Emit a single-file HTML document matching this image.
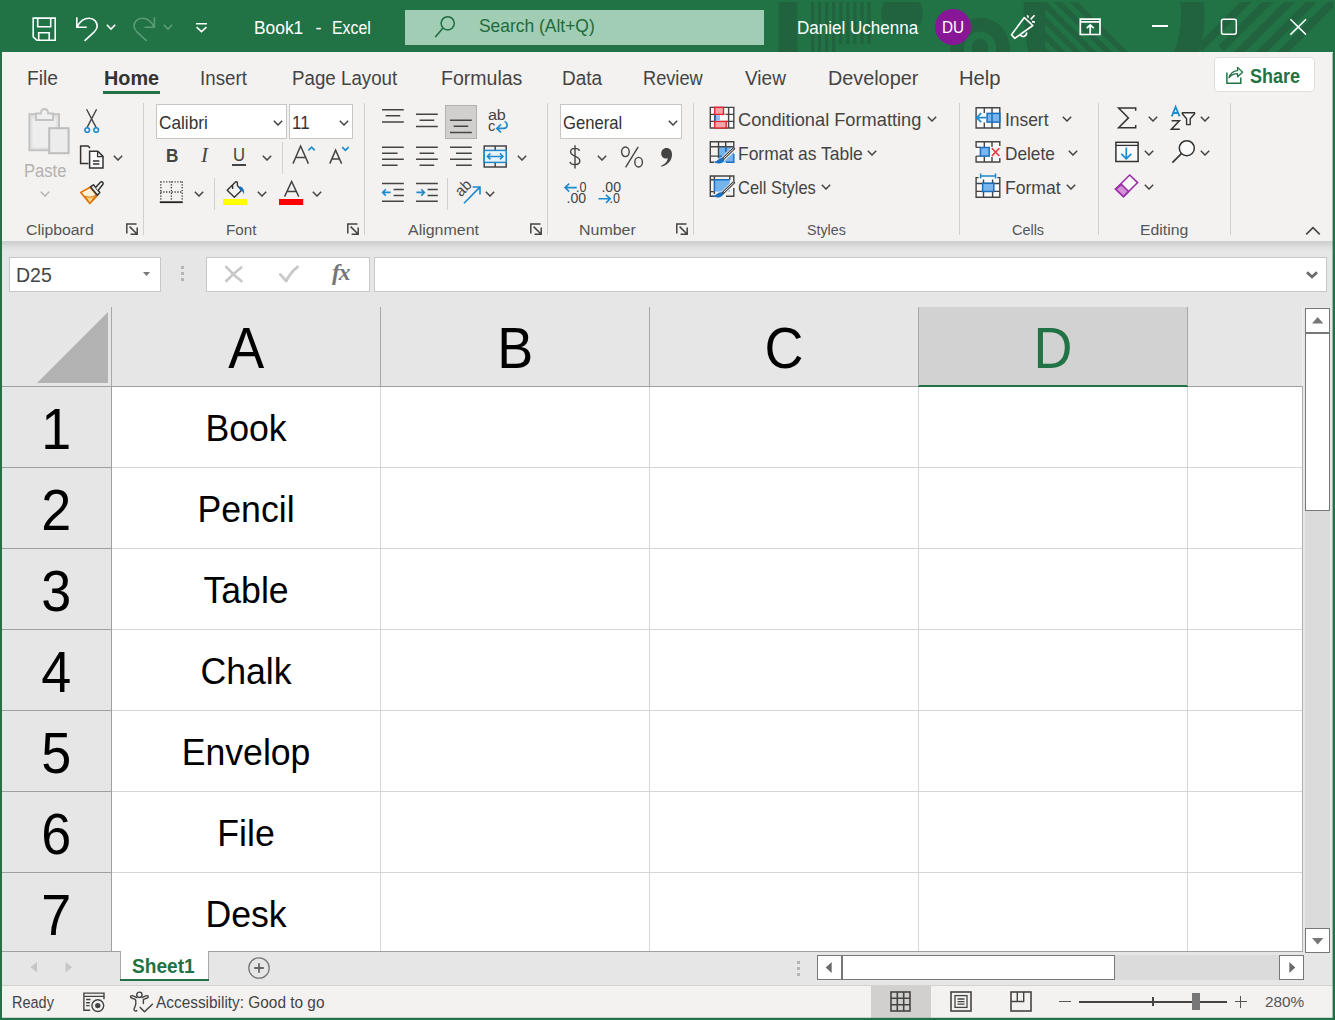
<!DOCTYPE html>
<html>
<head>
<meta charset="utf-8">
<title>Book1 - Excel</title>
<style>
*{box-sizing:border-box;margin:0;padding:0}
html,body{width:1335px;height:1020px;overflow:hidden;background:#f3f2f1}
body{font-family:"Liberation Sans",sans-serif;position:relative;color:#444}
.abs{position:absolute}
.t{position:absolute;white-space:nowrap;line-height:1;transform-origin:0 50%}
svg{position:absolute;overflow:visible}
/* frame */
#frameL{left:0;top:52px;width:2px;height:968px;background:#217346}
#frameR{left:1333px;top:52px;width:2px;height:968px;background:#217346}
#frameB{left:0;top:1018px;width:1335px;height:2px;background:#217346}
/* title */
#title{left:0;top:0;width:1335px;height:53px;background:#217346;overflow:hidden}
#title .t{color:#fff}
#search{left:405px;top:10px;width:359px;height:35px;background:#a0cdb4}
/* tabs */
#tabs{left:2px;top:52px;width:1331px;height:46px;background:#f3f2f1}
#tabs .t{font-size:19px;color:#444;top:66px}
/* ribbon */
#ribbon{left:2px;top:98px;width:1331px;height:143px;background:#f3f2f1}
.sep{position:absolute;width:1px;background:#d2d0ce;top:103px;height:132px}
.glabel{font-size:15px;color:#555;top:222px}
/* formula */
#fbar{left:2px;top:241px;width:1331px;height:66px;background:#e6e6e6}
.wbox{position:absolute;background:#fff;border:1px solid #c8c8c8}
/* grid */
#grid{left:2px;top:307px;width:1300px;height:644px;background:#fff;overflow:hidden}
.ch{position:absolute;top:307px;height:79px;background:#e6e6e6}
.chl{position:absolute;top:307px;height:79px;width:1px;background:#a8a8a8}
.ct{font-size:52px;color:#000;top:322px}
.rh{position:absolute;left:2px;width:109px;background:#e6e6e6}
.rt{font-size:52px;color:#000}
.vl{position:absolute;width:1px;background:#d6d6d6;top:387px;height:564px}
.hl{position:absolute;height:1px;background:#d6d6d6;left:112px;width:1190px}
.rhl{position:absolute;height:1px;background:#9f9f9f;left:2px;width:109px}
.cell{font-size:33px;color:#000}
</style>
</head>
<body>
<!-- TITLE BAR -->
<div id="title" class="abs">
<svg style="left:0;top:0" width="1335" height="53" viewBox="0 0 1335 53"><defs><clipPath id="tc"><rect x="0" y="2" width="1333" height="51"/></clipPath><clipPath id="d1"><rect x="1045" y="2" width="90" height="51"/></clipPath><clipPath id="d2"><rect x="1190" y="2" width="143" height="51"/></clipPath></defs>
<g fill="#22633f" clip-path="url(#tc)">
<rect x="778.500" y="2" width="19" height="51"/><rect x="811.0" y="2" width="3.2" height="50"/><rect x="818.0" y="2" width="3.2" height="50"/><rect x="825.1" y="2" width="3.2" height="50"/><rect x="832.1" y="2" width="3.2" height="50"/><rect x="839.2" y="2" width="3.2" height="42"/><rect x="846.2" y="2" width="3.2" height="42"/><rect x="853.3" y="2" width="3.2" height="42"/><rect x="860.4" y="2" width="3.2" height="42"/><rect x="867.4" y="2" width="3.2" height="42"/>
<circle cx="902" cy="13.600" r="21"/>
<path d="M950.5,47.300 A29.500,29.500 0 0 1 1009.500,47.300 V53 H995.800 V47.300 A15.800,15.800 0 0 0 964.200,47.300 V53 H950.500 Z"/>
<circle cx="980" cy="47.300" r="8.500"/>
<path d="M1023.700,2 H1045.200 V53 H1028.500 C1025,36 1023,20 1023.700,2 Z"/>
<path d="M1000,27 C1006,32 1010,42 1010,53 H1000 Z"/>
<path d="M1180.500,2 H1203.500 C1206,20 1204,38 1198.500,53 H1173.500 C1180,38 1182.500,20 1180.500,2 Z"/>
<g clip-path="url(#d1)"><polygon points="992.0,2 1000.0,2 1051.0,53 1043.0,53"/><polygon points="1007.5,2 1015.5,2 1066.5,53 1058.5,53"/><polygon points="1023.0,2 1031.0,2 1082.0,53 1074.0,53"/><polygon points="1038.5,2 1046.5,2 1097.5,53 1089.5,53"/><polygon points="1054.0,2 1062.0,2 1113.0,53 1105.0,53"/><polygon points="1069.5,2 1077.5,2 1128.5,53 1120.5,53"/></g>
<g clip-path="url(#d2)"><polygon points="1240.3,2 1251.5,2 1202.2,51.3 1196.6,45.7"/><polygon points="1262.1,2 1273.3,2 1224.0,51.3 1218.4,45.7"/><polygon points="1283.9,2 1295.1,2 1244.1,53 1232.9,53"/><polygon points="1305.7,2 1316.9,2 1265.9,53 1254.7,53"/><polygon points="1327.5,2 1338.7,2 1287.7,53 1276.5,53"/></g>
</g></svg>
<div id="search" class="abs"></div>
<svg style="left:31px;top:16px" width="27" height="27" viewBox="0 0 27 27"><path d="M2.200,2.100 H24.200 V24.300 H5.800 L2.200,20.800 Z M6.700,2.100 V10.700 H19.700 V2.100 M7.700,24.300 V16.700 H18.200 V24.300" fill="none" stroke="#fff" stroke-width="1.600"/></svg>
<svg style="left:74px;top:15px" width="26" height="28" viewBox="0 0 26 28"><path d="M2.800,2.300 V12.300 H12.700 M3.400,11.700 C6,6 10,3.200 15,3.200 C20,3.200 23.200,7 23.200,11 C23.200,14 21.600,15.600 20,17.200 L10.600,25.800" fill="none" stroke="#fff" stroke-width="1.600"/></svg>
<svg class="cv" style="left:106px;top:24px;width:11px;height:6.600px"><path d="M0.800,0.800 L5,5 L9.200,0.800" fill="none" stroke="#fff" stroke-width="1.600"/></svg>
<svg style="left:131px;top:15px" width="26" height="28" viewBox="0 0 26 28"><path d="M23.400,2.300 V12.300 H13.500 M22.800,11.700 C20.200,6 16.200,3.200 11.200,3.200 C6.200,3.200 3,7 3,11 C3,14 4.600,15.600 6.200,17.200 L15.600,25.800" fill="none" stroke="#5b9b78" stroke-width="1.600"/></svg>
<svg class="cv" style="left:163px;top:24px;width:11px;height:6.600px"><path d="M0.800,0.800 L5,5 L9.200,0.800" fill="none" stroke="#5b9b78" stroke-width="1.600"/></svg>
<svg style="left:195px;top:22px" width="13" height="11" viewBox="0 0 13 11"><path d="M1,1.700 H12 M1.600,5.200 L6.500,9.700 L11.400,5.200" fill="none" stroke="#fff" stroke-width="1.600"/></svg>
<svg style="left:433px;top:14px" width="24" height="25" viewBox="0 0 24 25"><circle cx="14.700" cy="9.300" r="6.600" fill="none" stroke="#1e6b40" stroke-width="1.500"/><path d="M10,14 L2.300,22.900" stroke="#1e6b40" stroke-width="1.600"/></svg>
<svg style="left:1009px;top:13px" width="28" height="28" viewBox="0 0 28 28"><g fill="none" stroke="#fff" stroke-width="1.600" stroke-linejoin="round"><path d="M15.300,4.600 L23.800,12.500 L5.800,25.400 L2.500,21.700 Z"/><path d="M11.200,21.700 A3.400,3.400 0 0 0 17.500,19.400"/><path d="M18.400,2.200 L19.400,4.800 M21.600,6.400 L25.600,2.300 M22.900,8.600 L25.900,9.100"/></g></svg>
<svg style="left:1079px;top:18px" width="22" height="18" viewBox="0 0 22 18"><path d="M1.300,1.200 H21 V16.500 H1.300 Z M1.300,3.900 H21 M11.200,16 V7.200 M7.700,10.200 L11.200,7 L14.700,10.200" fill="none" stroke="#fff" stroke-width="1.700"/></svg>
<div class="abs" style="left:1152px;top:25px;width:16px;height:1.500px;background:#fff"></div>
<svg style="left:1220px;top:18px" width="18" height="18" viewBox="0 0 18 18"><rect x="1.500" y="1.300" width="14.800" height="15" rx="2" fill="none" stroke="#fff" stroke-width="1.500"/></svg>
<svg style="left:1289px;top:18px" width="18" height="18" viewBox="0 0 18 18"><path d="M1.400,1.300 L17,16.600 M17,1.300 L1.400,16.600" stroke="#fff" stroke-width="1.500"/></svg>
<span class="t" style="left:254px;top:18.500px;font-size:18px;transform:scaleX(.965)">Book1</span><span class="t" style="left:315.500px;top:18.500px;font-size:18px">-</span><span class="t" style="left:332px;top:18.500px;font-size:18px;transform:scaleX(.88)">Excel</span>
<span class="t" style="left:479px;top:18.400px;font-size:17.800px;color:#1e6b40;transform:scaleX(.98)">Search (Alt+Q)</span>
<span class="t" style="left:797px;top:19.500px;font-size:17.500px;transform:scaleX(.973)">Daniel Uchenna</span>
<div class="abs" style="left:935px;top:9px;width:36px;height:36px;border-radius:50%;background:#881798"></div>
<span class="t" style="left:942px;top:19.300px;font-size:16.300px;transform:scaleX(.94)">DU</span>
</div>
<div id="frameL" class="abs"></div><div class="abs" style="left:1332px;top:53px;width:1px;height:965px;background:rgba(33,115,70,.4);z-index:5"></div><div class="abs" style="left:2px;top:1017px;width:1331px;height:1px;background:rgba(33,115,70,.2);z-index:5"></div><div id="frameR" class="abs"></div><div id="frameB" class="abs"></div>

<!-- TABS -->
<div id="tabs" class="abs"></div>
<div id="tabtexts">
<span class="t" style="left:27px;top:67.500px;font-size:20px;transform:scaleX(0.961)">File</span>
<span class="t" style="left:103.5px;top:67.500px;font-size:20px;font-weight:bold;color:#333;transform:scaleX(0.991)">Home</span>
<span class="t" style="left:200px;top:67.500px;font-size:20px;transform:scaleX(0.937)">Insert</span>
<span class="t" style="left:292.2px;top:67.500px;font-size:20px;transform:scaleX(0.937)">Page Layout</span>
<span class="t" style="left:440.7px;top:67.500px;font-size:20px;transform:scaleX(0.976)">Formulas</span>
<span class="t" style="left:562px;top:67.500px;font-size:20px;transform:scaleX(0.950)">Data</span>
<span class="t" style="left:642.8px;top:67.500px;font-size:20px;transform:scaleX(0.910)">Review</span>
<span class="t" style="left:744.5px;top:67.500px;font-size:20px;transform:scaleX(0.951)">View</span>
<span class="t" style="left:827.6px;top:67.500px;font-size:20px;transform:scaleX(0.990)">Developer</span>
<span class="t" style="left:959.3px;top:67.500px;font-size:20px;transform:scaleX(1.012)">Help</span>
</div>
<div class="abs" style="left:103px;top:91px;width:57px;height:3px;background:#217346"></div>
<div class="abs" style="left:1214px;top:57px;width:101px;height:35px;background:#fff;border:1px solid #e1dfdd;border-radius:4px"></div>
<span class="t" style="left:1250px;top:65.500px;font-size:20.600px;font-weight:bold;color:#217346;transform:scaleX(.875)">Share</span>
<svg style="left:1225px;top:65px" width="20" height="20" viewBox="0 0 20 20"><path d="M1.900,7.400 V18.300 H15.800 V12.500" fill="none" stroke="#217346" stroke-width="1.500"/><path d="M4,12.800 C5,8 9,5.600 12.600,5.600 V2.400 L17.600,7.200 L12.600,11.800 V8.600 C9,8.600 6,10 4,12.800 Z" fill="none" stroke="#217346" stroke-width="1.300" stroke-linejoin="round"/></svg>

<!-- RIBBON -->
<div id="ribbon" class="abs"></div>
<!--RIBBON-START-->
<svg width="0" height="0" style="left:0;top:0"><defs>
<symbol id="chev" viewBox="0 0 10 6"><path d="M0.8,0.8 L5,5 L9.2,0.8" fill="none" stroke="#444" stroke-width="1.5"/></symbol>
<symbol id="chevg" viewBox="0 0 10 6"><path d="M0.8,0.8 L5,5 L9.2,0.8" fill="none" stroke="#b5b3b1" stroke-width="1.5"/></symbol>
<symbol id="lnch" viewBox="0 0 12 12"><path d="M10.5,0.9 H0.8 V10.5 M3.6,3.6 L11,11 M11.2,4.6 V11.2 H4.6" fill="none" stroke="#444" stroke-width="1.5"/></symbol>
</defs></svg>
<style>
.cv{width:10px;height:6px}
.ln{width:12px;height:12px}
.gl{position:absolute;white-space:nowrap;line-height:1;font-size:15.5px;color:#555;top:222px;transform-origin:0 50%}
.rt18{position:absolute;white-space:nowrap;line-height:1;font-size:18.5px;color:#444;transform-origin:0 50%}
.cbox{position:absolute;background:#fff;border:1px solid #c8c6c4;top:104px;height:35px}
.ssep{position:absolute;width:1px;background:#d2d0ce}
</style>
<div class="sep" style="left:143px"></div>
<div class="sep" style="left:364px"></div>
<div class="sep" style="left:547px"></div>
<div class="sep" style="left:693px"></div>
<div class="sep" style="left:959px"></div>
<div class="sep" style="left:1098px"></div>
<div class="sep" style="left:1230px"></div>
<!-- Clipboard -->
<svg style="left:26px;top:106px" width="46" height="50" viewBox="0 0 46 50">
<rect x="3.4" y="8.2" width="29.6" height="36" fill="#e3e3e3" stroke="#c3c3c3" stroke-width="2"/>
<rect x="6.5" y="12.5" width="23.5" height="29" fill="#eeeeee"/>
<path d="M10,14 V7.5 H15 C15,1.5 22,1.500 22,7.5 H27 V14 Z" fill="#f0f0f0" stroke="#c3c3c3" stroke-width="1.8"/>
<rect x="23.2" y="22.2" width="19.4" height="25" fill="#ececec" stroke="#bdbdbd" stroke-width="2"/>
</svg>
<span class="t" style="left:24px;top:162px;font-size:18px;color:#b3b1af;transform:scaleX(.92)">Paste</span>
<svg class="cv" style="left:40px;top:191px"><use href="#chevg"/></svg>
<svg style="left:83px;top:108px" width="18" height="26" viewBox="0 0 18 26">
<path d="M3.6,1.2 L13.2,19.6 M13.6,1.2 L4,19.6" stroke="#444" stroke-width="1.4" fill="none"/>
<circle cx="4.2" cy="22" r="2.3" fill="none" stroke="#1e8bcd" stroke-width="1.6"/><circle cx="13.2" cy="22" r="2.3" fill="none" stroke="#1e8bcd" stroke-width="1.6"/></svg>
<svg style="left:79px;top:144px" width="26" height="26" viewBox="0 0 26 26">
<path d="M9.5,19.6 H1.6 V2 H9 L11,4" fill="none" stroke="#333" stroke-width="1.5"/>
<path d="M10.6,7.2 H18.8 L24,12.4 V24 H10.6 Z" fill="#fafafa" stroke="#333" stroke-width="1.5"/>
<path d="M18.6,7.4 V12.6 H23.8 M14,17 H20.4 M14,20 H20.4" fill="none" stroke="#333" stroke-width="1.3"/></svg>
<svg class="cv" style="left:113px;top:155px"><use href="#chev"/></svg>
<svg style="left:79px;top:180px" width="26" height="25" viewBox="0 0 26 25">
<path d="M1.8,12.4 L11.2,7.2 L18.2,15.6 L10.8,23.4 Z" fill="#fdf1d8" stroke="#e07000" stroke-width="1.6" stroke-linejoin="round"/>
<path d="M6.2,16.2 C10,17.6 14,17.4 17,14.8 L10.8,23.2 Z" fill="#fbd38a" stroke="#e07000" stroke-width="1"/>
<path d="M11.4,6.8 L14.4,4.8 L20.8,12.6 L18.4,15.2 Z" fill="#f3f2f1" stroke="#333" stroke-width="1.5" stroke-linejoin="round"/>
<path d="M16.6,7.6 L21.4,2.2 C23,1 25,3 23.8,4.6 L19,10.4" fill="#f3f2f1" stroke="#333" stroke-width="1.5" stroke-linejoin="round"/></svg>
<span class="gl" style="left:26px;transform:scaleX(1.02)">Clipboard</span>
<svg class="ln" style="left:126px;top:223px"><use href="#lnch"/></svg>
<!-- Font -->
<div class="cbox" style="left:156px;width:131px"></div>
<div class="cbox" style="left:289px;width:64px"></div>
<span class="rt18" style="left:159px;top:114px;color:#333;transform:scaleX(.93)">Calibri</span>
<svg class="cv" style="left:273px;top:120px"><use href="#chev"/></svg>
<span class="rt18" style="left:292px;top:114px;color:#333;transform:scaleX(.92)">11</span>
<svg class="cv" style="left:339px;top:120px"><use href="#chev"/></svg>
<span class="t" style="left:166px;top:146px;font-size:19px;font-weight:bold;color:#444;transform:scaleX(.9)">B</span>
<span class="t" style="left:201px;top:145px;font-size:21px;font-style:italic;font-family:'Liberation Serif',serif;color:#444">I</span>
<span class="t" style="left:233px;top:146px;font-size:18.5px;color:#444;transform:scaleX(.9)">U</span>
<div class="abs" style="left:232px;top:164px;width:14px;height:1.5px;background:#444"></div>
<svg class="cv" style="left:262px;top:155px"><use href="#chev"/></svg>
<div class="ssep" style="left:282px;top:142px;height:32px"></div>
<svg style="left:292px;top:145px" width="25" height="20" viewBox="0 0 25 20"><path d="M1,18.6 L8.6,1 L16.4,18.6 M3.8,12.6 H13.6" fill="none" stroke="#444" stroke-width="1.5"/><path d="M16.4,5.4 L19.6,2.2 L22.8,5.4" fill="none" stroke="#1e8bcd" stroke-width="1.7"/></svg>
<svg style="left:329px;top:145px" width="22" height="20" viewBox="0 0 22 20"><path d="M0.8,18.6 L6.6,5.2 L12.6,18.6 M3,14 H10.4" fill="none" stroke="#444" stroke-width="1.5"/><path d="M13.2,2.2 L16.4,5.4 L19.6,2.2" fill="none" stroke="#1e8bcd" stroke-width="1.7"/></svg>
<svg style="left:159px;top:180px" width="25" height="25" viewBox="0 0 25 25">
<path d="M1.5,1.8 H23.5 M1.5,12 H23.5 M1.8,1.5 V21 M12.4,1.5 V21 M23.2,1.5 V21" fill="none" stroke="#333" stroke-width="1.3" stroke-dasharray="1.2 1.6"/>
<path d="M0.8,22.2 H23.8" stroke="#222" stroke-width="1.8"/></svg>
<svg class="cv" style="left:194px;top:191px"><use href="#chev"/></svg>
<div class="ssep" style="left:214px;top:178px;height:32px"></div>
<svg style="left:222px;top:180px" width="27" height="26" viewBox="0 0 27 26">
<path d="M5.2,10.2 L13,2.4 C13.8,1.4 15.2,1.600 15.4,3 V5.600 L19.6,10.2 L12.4,17.2 Z M10.6,4.800 V9" fill="#f3f2f1" stroke="#333" stroke-width="1.4" stroke-linejoin="round"/>
<path d="M17.4,6.2 C20.6,6.600 22.8,10 22,14.4 C21,11.400 19.6,10.2 17.6,9.4 Z" fill="#1a6fc0"/>
<rect x="1" y="19" width="24.2" height="6" fill="#ffff00"/></svg>
<svg class="cv" style="left:257px;top:191px"><use href="#chev"/></svg>
<svg style="left:278px;top:180px" width="27" height="26" viewBox="0 0 27 26">
<path d="M6.6,16.6 L13.6,1.4 L20.8,16.6 M9.2,11.400 H18.2" fill="none" stroke="#444" stroke-width="1.5"/>
<rect x="1" y="19" width="24.2" height="6" fill="#ff0000"/></svg>
<svg class="cv" style="left:312px;top:191px"><use href="#chev"/></svg>
<span class="gl" style="left:226px;transform:scaleX(.98)">Font</span>
<svg class="ln" style="left:347px;top:223px"><use href="#lnch"/></svg>
<!-- Alignment -->
<div class="abs" style="left:445px;top:105px;width:32px;height:34px;background:#d2d0ce;border:1px solid #b3b1af"></div>
<svg style="left:380px;top:104px" width="130" height="102" viewBox="0 0 130 102">
<g stroke="#444" stroke-width="1.5" fill="none">
<path d="M2,5.7 H23.8 M5.6,11.8 H20.2 M2,17.9 H23.8"/>
<path d="M36,10.2 H57.800 M39.6,16.3 H54.2 M36,22.4 H57.800"/>
<path d="M70,16.3 H91.8 M73.6,22.3 H88.2 M70,28.4 H91.8"/>
<path d="M2,43.2 H23.8 M2,49.2 H17.600 M2,55.3 H23.8 M2,61.300 H17.600"/>
<path d="M36,43.2 H57.800 M39.6,49.2 H54.2 M36,55.3 H57.800 M39.6,61.300 H54.2"/>
<path d="M70,43.2 H91.8 M76,49.2 H91.8 M70,55.3 H91.8 M76,61.300 H91.8"/>
<path d="M2,79.4 H23.8 M13.600,85.4 H23.8 M13.600,91.4 H23.8 M2,97.3 H23.8"/>
<path d="M36,79.4 H57.800 M47.600,85.4 H57.800 M47.600,91.4 H57.800 M36,97.3 H57.800"/>
</g>
<g stroke="#1e8bcd" stroke-width="1.6" fill="none">
<path d="M10.6,88.4 H2.8 M5.8,85.2 L2.6,88.4 L5.8,91.6"/>
<path d="M36.4,88.4 H44.2 M41.2,85.2 L44.400,88.4 L41.2,91.6"/>
</g>
<!-- merge -->
<path d="M104.2,42 H126.200 V63 H104.2 Z M115.2,42 V46.200 M115.2,58.6 V63" stroke="#444" stroke-width="1.5" fill="none"/>
<rect x="104.2" y="46.400" width="22" height="12" fill="#eaf3fb" stroke="#1e8bcd" stroke-width="1.5"/>
<path d="M107.6,52.400 H122.800 M110.4,49.4 L107.4,52.400 L110.4,55.400 M120,49.4 L123,52.400 L120,55.400" stroke="#1e8bcd" stroke-width="1.5" fill="none"/>
</svg>
<span class="t" style="left:487.500px;top:107px;font-size:15.500px;color:#444;transform:scaleX(1.04);letter-spacing:-.3px">ab</span>
<span class="t" style="left:487.500px;top:118px;font-size:15.500px;color:#444;transform:scaleX(.95)">c</span>
<svg style="left:495px;top:120px" width="14" height="14" viewBox="0 0 14 14"><path d="M9.6,1.400 C13.600,3.400 12.6,8.6 8.6,8.4 H2 M6,4.400 L1.800,8.4 L6,12.4" fill="none" stroke="#1e8bcd" stroke-width="1.6"/></svg>
<svg class="cv" style="left:517px;top:155px"><use href="#chev"/></svg>
<div class="ssep" style="left:447px;top:178px;height:32px"></div>
<svg style="left:455px;top:181px" width="27" height="24" viewBox="0 0 27 24">
<path d="M9,22.200 L24.400,6.600 M17.600,6 H25 V13.400" fill="none" stroke="#1e8bcd" stroke-width="1.600"/>
<text x="0" y="0" transform="translate(6,16.400) rotate(-45)" font-family="Liberation Sans" font-size="15.500" fill="#444" textLength="16.500" lengthAdjust="spacingAndGlyphs">ab</text></svg>
<svg class="cv" style="left:485px;top:191px"><use href="#chev"/></svg>
<span class="gl" style="left:408px;transform:scaleX(1.03)">Alignment</span>
<svg class="ln" style="left:530px;top:223px"><use href="#lnch"/></svg>
<!-- Number -->
<div class="cbox" style="left:560px;width:122px"></div>
<span class="rt18" style="left:563px;top:114px;color:#333;transform:scaleX(.9)">General</span>
<svg class="cv" style="left:668px;top:120px"><use href="#chev"/></svg>
<svg style="left:568px;top:144px" width="14" height="26" viewBox="0 0 14 26"><path d="M11.600,6.800 C10,3.400 2.600,3.400 2.600,7.800 C2.600,13 11.800,11.400 11.800,17 C11.800,21.6 3.400,21.6 1.800,18 M7,1.200 V24.600" fill="none" stroke="#444" stroke-width="1.4"/></svg>
<svg class="cv" style="left:597px;top:155px"><use href="#chev"/></svg>
<svg style="left:620px;top:145px" width="24" height="24" viewBox="0 0 24 24"><g fill="none" stroke="#444" stroke-width="1.4"><ellipse cx="5.400" cy="6.800" rx="3.800" ry="4.800"/><ellipse cx="18.6" cy="17.200" rx="3.800" ry="4.800"/><path d="M18.200,1.800 L5.600,22.400"/></g></svg>
<svg style="left:660px;top:147px" width="13" height="21" viewBox="0 0 13 21"><path d="M6.400,1 C10,1 12,3.600 12,7.400 C12,13.600 7.600,18 1.400,19.800 L1.200,18.8 C5.400,17 7.600,14.200 7.800,11 C7.200,11.400 6.600,11.600 5.800,11.600 C3,11.600 1.200,9.400 1.200,6.600 C1.200,3.400 3.400,1 6.400,1 Z" fill="#444"/></svg>
<svg style="left:563px;top:180px" width="60" height="25" viewBox="0 0 60 25">
<g font-family="Liberation Sans" font-size="14" fill="#444">
<text x="13" y="12.200" textLength="10.5" lengthAdjust="spacingAndGlyphs">.0</text>
<text x="3.600" y="23.400" textLength="19.600" lengthAdjust="spacingAndGlyphs">.00</text>
<text x="38.400" y="12.200" textLength="19.600" lengthAdjust="spacingAndGlyphs">.00</text>
<text x="46.600" y="23.400" textLength="10.5" lengthAdjust="spacingAndGlyphs">.0</text></g>
<path d="M13.800,7.600 H2.200 M6.200,3.600 L2,7.600 L6.200,11.600" fill="none" stroke="#1e8bcd" stroke-width="1.6"/>
<path d="M35.400,18.800 H47 M43,14.800 L47.200,18.800 L43,22.800" fill="none" stroke="#1e8bcd" stroke-width="1.6"/></svg>
<span class="gl" style="left:579px;transform:scaleX(1.03)">Number</span>
<svg class="ln" style="left:676px;top:223px"><use href="#lnch"/></svg>
<!-- Styles -->
<svg style="left:709px;top:106px" width="27" height="24" viewBox="0 0 27 24">
<rect x="1.300" y="1.400" width="23.500" height="20.600" fill="#fafafa"/>
<path d="M1.300,1.400 H24.800 V22 H1.300 Z M1.300,8.400 H5 M14.600,8.400 H24.800 M1.300,15.400 H5 M17.400,15.400 H24.800 M19.600,1.400 V22 M5.700,1.400 V22" fill="none" stroke="#444" stroke-width="1.400"/>
<rect x="11" y="8.400" width="6" height="7" fill="#fafafa"/>
<rect x="5.700" y="1.400" width="8.800" height="7" fill="#f9a3ab" stroke="#e0282f" stroke-width="1.400"/>
<rect x="5.700" y="15.400" width="11.500" height="6.600" fill="#f9a3ab" stroke="#e0282f" stroke-width="1.400"/>
<rect x="6.400" y="9.100" width="4.600" height="5.600" fill="#8cc0ee"/><path d="M6.200,9.100 V14.700" stroke="#1a6fc0" stroke-width="1.600"/></svg>
<svg style="left:709px;top:140px" width="27" height="25" viewBox="0 0 27 25">
<rect x="9.500" y="6.800" width="15.300" height="15.500" fill="#74b3ec"/>
<path d="M24.800,6.800 V1.700 H1.300 V22.300 H5 M1.300,6.800 H24.800 M1.300,16.100 H9.500 M9.500,1.700 V18 M16.700,1.700 V11" fill="none" stroke="#444" stroke-width="1.4"/>
<path d="M16.700,6.800 V12 M9.500,16.100 H13 M24.800,14 V22.300 H17" fill="none" stroke="#1a6fc0" stroke-width="1.4"/>
<path d="M24.600,9 L13.600,19.600" stroke="#f3f2f1" stroke-width="4.600"/>
<path d="M24.800,8.600 L13.400,19.400" stroke="#444" stroke-width="2.800" stroke-linecap="round"/>
<path d="M24.400,9 L15,18" stroke="#e8e8e8" stroke-width="1" stroke-linecap="round"/>
<path d="M4.400,21.600 C8,21.800 9.400,18.400 12.800,18.200 C15,18.600 15.400,20.600 14.400,21.800 C12,24.400 6.600,24 4.400,21.600 Z" fill="#1a6fc0"/></svg>
<svg style="left:709px;top:174px" width="27" height="25" viewBox="0 0 27 25">
<rect x="5.400" y="5.800" width="15.400" height="11.800" fill="#74b3ec"/>
<path d="M24.800,7 V2 H1.300 V22.200 H5 M24.800,14 V22.200 H17 M1.300,5.800 H5.400 M20.800,2 V5.800 M5.400,2 V5.800 M1.300,17.600 H5.400 M5.400,17.600 V20" fill="none" stroke="#444" stroke-width="1.4"/>
<path d="M5.400,17.600 V5.800 H20.800" fill="none" stroke="#1a6fc0" stroke-width="1.5"/>
<path d="M24.600,9 L13.600,19.600" stroke="#f3f2f1" stroke-width="4.600"/>
<path d="M24.800,8.600 L13.400,19.400" stroke="#444" stroke-width="2.800" stroke-linecap="round"/>
<path d="M24.400,9 L15,18" stroke="#e8e8e8" stroke-width="1" stroke-linecap="round"/>
<path d="M3.400,21.600 C7,21.800 8.400,18.400 11.800,18.200 C14,18.600 14.400,20.600 13.400,21.800 C11,24.400 5.600,24 3.400,21.600 Z" fill="#1a6fc0"/></svg>
<span class="rt18" style="left:738px;top:111px;transform:scaleX(.985)">Conditional Formatting</span>
<svg class="cv" style="left:927px;top:116px"><use href="#chev"/></svg>
<span class="rt18" style="left:738px;top:145px;transform:scaleX(.943)">Format as Table</span>
<svg class="cv" style="left:867px;top:150px"><use href="#chev"/></svg>
<span class="rt18" style="left:738px;top:179px;transform:scaleX(.89)">Cell Styles</span>
<svg class="cv" style="left:821px;top:184px"><use href="#chev"/></svg>
<span class="gl" style="left:807px;transform:scaleX(.92)">Styles</span>
<!-- Cells -->
<svg style="left:975px;top:106px" width="27" height="24" viewBox="0 0 27 24">
<rect x="1.100" y="1.700" width="23.700" height="20.300" fill="#fafafa"/>
<path d="M1.100,1.700 H24.800 V22 H1.100 Z M9.300,1.700 V7 M9.300,16.500 V22 M17,1.700 V22" fill="none" stroke="#444" stroke-width="1.4"/>
<rect x="12.100" y="7.400" width="12.700" height="8.700" fill="#7ab6ec" stroke="#1a6fc0" stroke-width="1.500"/><path d="M17,7.400 V16.100" stroke="#1a6fc0" stroke-width="1.500"/>
<path d="M11.400,11.700 H1.800 M6.200,7.200 L1.600,11.700 L6.200,16.200" fill="none" stroke="#1e8bcd" stroke-width="1.700"/></svg>
<svg style="left:975px;top:140px" width="27" height="24" viewBox="0 0 27 24">
<rect x="1.100" y="1.700" width="23.700" height="20.300" fill="#fafafa"/>
<path d="M1.100,7.600 V1.700 H24.800 V6 M24.800,18 V22 H1.100 V16 M1.100,7.400 H5.400 M1.100,16.100 H5.400 M9.300,1.700 V7 M9.300,16.500 V22 M17,1.700 V7 M17,17 V22" fill="none" stroke="#444" stroke-width="1.400"/>
<circle cx="20.600" cy="12" r="5.600" fill="#f3f2f1"/>
<rect x="5.400" y="7.500" width="8.800" height="8.600" fill="#7ab6ec" stroke="#1a6fc0" stroke-width="1.500"/>
<path d="M16.800,8.300 L24.400,16 M24.400,8.300 L16.800,16" stroke="#e8383d" stroke-width="1.600"/></svg>
<svg style="left:975px;top:173px" width="27" height="26" viewBox="0 0 27 26">
<rect x="1.100" y="4.600" width="23.700" height="19.700" fill="#fafafa"/>
<path d="M3.600,4.600 H1.100 V24.300 H24.800 V4.600 H22.300 M8.500,6.400 V24.300 M17.600,6.400 V24.300 M1.100,10.500 H24.800 M1.100,18.400 H24.800" fill="none" stroke="#444" stroke-width="1.400"/>
<path d="M5.600,3 H20.500 M5.600,0.600 V5.400 M20.500,0.600 V5.400" fill="none" stroke="#1e8bcd" stroke-width="1.500"/>
<rect x="7.600" y="10.300" width="11.200" height="8.200" fill="#7ab6ec" stroke="#1a6fc0" stroke-width="1.500"/></svg>
<span class="rt18" style="left:1005px;top:111px;transform:scaleX(.94)">Insert</span>
<svg class="cv" style="left:1062px;top:116px"><use href="#chev"/></svg>
<span class="rt18" style="left:1005px;top:145px;transform:scaleX(.93)">Delete</span>
<svg class="cv" style="left:1068px;top:150px"><use href="#chev"/></svg>
<span class="rt18" style="left:1005px;top:179px;transform:scaleX(.95)">Format</span>
<svg class="cv" style="left:1066px;top:184px"><use href="#chev"/></svg>
<span class="gl" style="left:1012px;transform:scaleX(.93)">Cells</span>
<!-- Editing -->
<svg style="left:1117px;top:106px" width="20" height="24" viewBox="0 0 20 24"><path d="M18.700,4.700 V2.100 H1.600 L11.400,11.900 L1.600,21.700 H18.700 V19" fill="none" stroke="#333" stroke-width="1.500"/></svg>
<svg class="cv" style="left:1148px;top:116px"><use href="#chev"/></svg>
<svg style="left:1170px;top:105px" width="27" height="26" viewBox="0 0 27 26">
<path d="M1.800,11.400 L5.600,1.800 L9.600,11.400 M3.200,8 H8.200" fill="none" stroke="#1e8bcd" stroke-width="1.800"/>
<path d="M1.600,15.800 H9.400 L1.400,24.200 H9.800" fill="none" stroke="#333" stroke-width="1.500"/>
<path d="M12.300,7.800 H24.600 V8.800 L20.200,13.800 V19.600 H16.600 V13.800 L12.300,8.800 Z" fill="#f8f8f8" stroke="#333" stroke-width="1.400" stroke-linejoin="round"/></svg>
<svg class="cv" style="left:1200px;top:116px"><use href="#chev"/></svg>
<svg style="left:1114px;top:140px" width="26" height="24" viewBox="0 0 26 24">
<rect x="1.900" y="2.300" width="22.200" height="19.200" fill="#fafafa" stroke="#333" stroke-width="1.500"/>
<path d="M1.900,5.400 H24.100" stroke="#333" stroke-width="1.300"/>
<path d="M12.300,7.400 V18.600 M7.300,13.800 L12.300,18.800 L17.300,13.800" fill="none" stroke="#1e8bcd" stroke-width="1.700"/></svg>
<svg class="cv" style="left:1144px;top:150px"><use href="#chev"/></svg>
<svg style="left:1170px;top:138px" width="27" height="27" viewBox="0 0 27 27"><circle cx="16.800" cy="10.200" r="7.500" fill="#fafafa" stroke="#333" stroke-width="1.500"/><path d="M11.400,15.600 L2.400,24.600" stroke="#333" stroke-width="1.600"/></svg>
<svg class="cv" style="left:1200px;top:150px"><use href="#chev"/></svg>
<svg style="left:1114px;top:173px" width="26" height="26" viewBox="0 0 26 26">
<path d="M15.700,2 L23.600,9.600 L9.500,23.600 L1.600,16 Z" fill="#fafafa" stroke="#9b2fa8" stroke-width="1.600" stroke-linejoin="miter"/>
<path d="M7.600,11.600 L14.600,18.400 L9.500,23.600 L1.600,16 Z" fill="#d490da" stroke="#9b2fa8" stroke-width="1.600"/></svg>
<svg class="cv" style="left:1144px;top:184px"><use href="#chev"/></svg>
<span class="gl" style="left:1140px;transform:scaleX(1.02)">Editing</span>
<svg style="left:1305px;top:226px" width="16" height="10" viewBox="0 0 16 10"><path d="M1.200,8.400 L8,1.600 L14.800,8.400" fill="none" stroke="#444" stroke-width="1.600"/></svg>

<!--RIBBON-END-->


<!-- FORMULA BAR -->
<div id="fbar" class="abs"></div>
<!--FBAR-START-->
<div class="abs" style="left:2px;top:241px;width:1331px;height:10px;background:linear-gradient(#cdcdcd,#d3d3d3 25%,#dedede 55%,#e6e6e6)"></div>
<div class="wbox" style="left:9px;top:257px;width:152px;height:35px"></div>
<span class="t" style="left:16px;top:266px;font-size:19.5px;color:#444">D25</span>
<svg style="left:143px;top:272px" width="8" height="5"><polygon points="0,0 7,0 3.5,4" fill="#777"/></svg>
<div class="abs" style="left:181px;top:266px;width:3px;height:3px;background:#b4b4b4"></div>
<div class="abs" style="left:181px;top:272px;width:3px;height:3px;background:#b4b4b4"></div>
<div class="abs" style="left:181px;top:278px;width:3px;height:3px;background:#b4b4b4"></div>
<div class="wbox" style="left:206px;top:257px;width:164px;height:35px"></div>
<svg style="left:225px;top:266px" width="18" height="16" viewBox="0 0 18 16"><path d="M1.2,0.8 C5,5 11,11 16.6,15.2 M16.2,1.4 C11,5.5 5,11 1.2,15" stroke="#c8c8c8" stroke-width="2.600" fill="none" stroke-linecap="round"/></svg>
<svg style="left:279px;top:266px" width="20" height="17" viewBox="0 0 20 17"><path d="M1.2,8.4 L7.2,15 C10,9.5 14,4.5 18.6,0.9" stroke="#c8c8c8" stroke-width="2.8" fill="none" stroke-linecap="round" stroke-linejoin="round"/></svg>
<span class="t" style="left:332px;top:261px;font-size:23.500px;font-family:'Liberation Serif',serif;font-style:italic;font-weight:bold;color:#767676;letter-spacing:-1px">fx</span>
<div class="wbox" style="left:374px;top:257px;width:953px;height:35px"></div>
<svg style="left:1306px;top:271px" width="12" height="8" viewBox="0 0 12 8"><path d="M1,1.200 L6,6 L11,1.200" stroke="#6a6a6a" stroke-width="2.700" fill="none"/></svg>
<!--FBAR-END-->

<!-- GRID -->
<div id="grid" class="abs"></div>
<!--GRID-START-->
<div class="abs" style="left:2px;top:307px;width:1300px;height:79px;background:#e6e6e6"></div>
<div class="abs" style="left:919px;top:307px;width:268px;height:79px;background:#d2d2d2"></div>
<div class="abs" style="left:2px;top:386px;width:1300px;height:1px;background:#9f9f9f"></div>
<div class="abs" style="left:918px;top:385px;width:270px;height:2px;background:#217346"></div>
<div class="chl" style="left:111px"></div>
<div class="chl" style="left:380px"></div>
<div class="chl" style="left:649px"></div>
<div class="chl" style="left:918px"></div>
<div class="chl" style="left:1187px"></div>
<svg style="left:2px;top:307px" width="110" height="80"><polygon points="35,76 106,76 106,5" fill="#b3b3b3"/></svg>
<div class="abs ct" style="left:112px;width:268px;top:318px;text-align:center;font-size:58px;line-height:60px;color:#000"><span style="display:inline-block;transform:scaleX(.93)">A</span></div>
<div class="abs ct" style="left:381px;width:268px;top:318px;text-align:center;font-size:58px;line-height:60px;color:#000"><span style="display:inline-block;transform:scaleX(.93)">B</span></div>
<div class="abs ct" style="left:650px;width:268px;top:318px;text-align:center;font-size:58px;line-height:60px;color:#000"><span style="display:inline-block;transform:scaleX(.93)">C</span></div>
<div class="abs ct" style="left:919px;width:268px;top:318px;text-align:center;font-size:58px;line-height:60px;color:#217346"><span style="display:inline-block;transform:scaleX(.93)">D</span></div>
<div class="abs" style="left:2px;top:387px;width:109px;height:564px;background:#e6e6e6"></div>
<div class="abs" style="left:111px;top:387px;width:1px;height:564px;background:#9f9f9f"></div>
<div class="vl" style="left:380px"></div>
<div class="vl" style="left:649px"></div>
<div class="vl" style="left:918px"></div>
<div class="vl" style="left:1187px"></div>
<div class="hl" style="top:467px"></div><div class="rhl" style="top:467px"></div>
<div class="abs" style="left:2px;width:109px;top:387px;height:80px;overflow:hidden"><div class="abs rt" style="left:0;width:109px;top:12px;text-align:center;font-size:58px;line-height:60px"><span style="display:inline-block;transform:scaleX(.93)">1</span></div></div>
<div class="abs" style="left:112px;width:268px;top:387px;height:80px;overflow:hidden"><div class="abs cell" style="left:0;width:268px;top:22px;text-align:center;font-size:36px;line-height:40px"><span style="display:inline-block;transform:scaleX(.99)">Book</span></div></div>
<div class="hl" style="top:548px"></div><div class="rhl" style="top:548px"></div>
<div class="abs" style="left:2px;width:109px;top:468px;height:80px;overflow:hidden"><div class="abs rt" style="left:0;width:109px;top:12px;text-align:center;font-size:58px;line-height:60px"><span style="display:inline-block;transform:scaleX(.93)">2</span></div></div>
<div class="abs" style="left:112px;width:268px;top:468px;height:80px;overflow:hidden"><div class="abs cell" style="left:0;width:268px;top:22px;text-align:center;font-size:36px;line-height:40px"><span style="display:inline-block;transform:scaleX(.99)">Pencil</span></div></div>
<div class="hl" style="top:629px"></div><div class="rhl" style="top:629px"></div>
<div class="abs" style="left:2px;width:109px;top:549px;height:80px;overflow:hidden"><div class="abs rt" style="left:0;width:109px;top:12px;text-align:center;font-size:58px;line-height:60px"><span style="display:inline-block;transform:scaleX(.93)">3</span></div></div>
<div class="abs" style="left:112px;width:268px;top:549px;height:80px;overflow:hidden"><div class="abs cell" style="left:0;width:268px;top:22px;text-align:center;font-size:36px;line-height:40px"><span style="display:inline-block;transform:scaleX(.99)">Table</span></div></div>
<div class="hl" style="top:710px"></div><div class="rhl" style="top:710px"></div>
<div class="abs" style="left:2px;width:109px;top:630px;height:80px;overflow:hidden"><div class="abs rt" style="left:0;width:109px;top:12px;text-align:center;font-size:58px;line-height:60px"><span style="display:inline-block;transform:scaleX(.93)">4</span></div></div>
<div class="abs" style="left:112px;width:268px;top:630px;height:80px;overflow:hidden"><div class="abs cell" style="left:0;width:268px;top:22px;text-align:center;font-size:36px;line-height:40px"><span style="display:inline-block;transform:scaleX(.99)">Chalk</span></div></div>
<div class="hl" style="top:791px"></div><div class="rhl" style="top:791px"></div>
<div class="abs" style="left:2px;width:109px;top:711px;height:80px;overflow:hidden"><div class="abs rt" style="left:0;width:109px;top:12px;text-align:center;font-size:58px;line-height:60px"><span style="display:inline-block;transform:scaleX(.93)">5</span></div></div>
<div class="abs" style="left:112px;width:268px;top:711px;height:80px;overflow:hidden"><div class="abs cell" style="left:0;width:268px;top:22px;text-align:center;font-size:36px;line-height:40px"><span style="display:inline-block;transform:scaleX(.99)">Envelop</span></div></div>
<div class="hl" style="top:872px"></div><div class="rhl" style="top:872px"></div>
<div class="abs" style="left:2px;width:109px;top:792px;height:80px;overflow:hidden"><div class="abs rt" style="left:0;width:109px;top:12px;text-align:center;font-size:58px;line-height:60px"><span style="display:inline-block;transform:scaleX(.93)">6</span></div></div>
<div class="abs" style="left:112px;width:268px;top:792px;height:80px;overflow:hidden"><div class="abs cell" style="left:0;width:268px;top:22px;text-align:center;font-size:36px;line-height:40px"><span style="display:inline-block;transform:scaleX(.99)">File</span></div></div>
<div class="abs" style="left:2px;width:109px;top:873px;height:78px;overflow:hidden"><div class="abs rt" style="left:0;width:109px;top:12px;text-align:center;font-size:58px;line-height:60px"><span style="display:inline-block;transform:scaleX(.93)">7</span></div></div>
<div class="abs" style="left:112px;width:268px;top:873px;height:78px;overflow:hidden"><div class="abs cell" style="left:0;width:268px;top:22px;text-align:center;font-size:36px;line-height:40px"><span style="display:inline-block;transform:scaleX(.99)">Desk</span></div></div>
<div class="abs" style="left:1302px;top:386px;width:1px;height:565px;background:#b0b0b0"></div>
<div class="abs" style="left:1303px;top:307px;width:30px;height:644px;background:#e6e6e6"></div>
<!--GRID-END-->

<!-- BOTTOM -->
<!--BOTTOM-START-->
<!-- vscroll -->
<div class="abs" style="left:1305px;top:333px;width:25px;height:595px;background:#dbdbdb"></div>
<div class="abs" style="left:1305px;top:308px;width:25px;height:25px;background:#fff;border:1px solid #777"></div>
<svg style="left:1312px;top:317px" width="12" height="7"><polygon points="0,6.5 11.4,6.5 5.7,0" fill="#777"/></svg>
<div class="abs" style="left:1305px;top:333px;width:25px;height:178px;background:#fff;border:1px solid #777"></div>
<div class="abs" style="left:1305px;top:928px;width:25px;height:25px;background:#fff;border:1px solid #777;z-index:3"></div>
<svg style="left:1312px;top:938px;z-index:4" width="12" height="7"><polygon points="0,0 11.4,0 5.7,6.5" fill="#777"/></svg>
<!-- sheet tab row -->
<div class="abs" style="left:2px;top:951px;width:1331px;height:34px;background:#e6e6e6"></div>
<div class="abs" style="left:2px;top:951px;width:1301px;height:1px;background:#9f9f9f"></div>
<svg style="left:30px;top:962px" width="8" height="11"><polygon points="7,0 7,10.5 0.5,5.2" fill="#c6c6c6"/></svg>
<svg style="left:65px;top:962px" width="8" height="11"><polygon points="0.5,0 0.5,10.5 7,5.2" fill="#c6c6c6"/></svg>
<div class="abs" style="left:120px;top:951px;width:89px;height:29px;background:#fff;border-left:1px solid #a8a8a8;border-right:1px solid #a8a8a8"></div>
<div class="abs" style="left:120px;top:979px;width:89px;height:2px;background:#217346"></div>
<span class="t" style="left:132px;top:957px;font-size:19.5px;font-weight:bold;color:#217346;transform:scaleX(.98)">Sheet1</span>
<svg style="left:248px;top:957px" width="22" height="22" viewBox="0 0 22 22"><circle cx="11" cy="11" r="10.2" fill="none" stroke="#777" stroke-width="1.3"/><path d="M11,6.200 V15.800 M6.200,11 H15.800" stroke="#666" stroke-width="1.800"/></svg>
<div class="abs" style="left:797px;top:961px;width:3px;height:3px;background:#b4b4b4"></div>
<div class="abs" style="left:797px;top:967px;width:3px;height:3px;background:#b4b4b4"></div>
<div class="abs" style="left:797px;top:973px;width:3px;height:3px;background:#b4b4b4"></div>
<div class="abs" style="left:842px;top:955px;width:438px;height:25px;background:#dbdbdb"></div>
<div class="abs" style="left:817px;top:955px;width:25px;height:25px;background:#fff;border:1px solid #777"></div>
<svg style="left:825px;top:962px" width="8" height="12"><polygon points="6.700,0 6.700,11 0.700,5.500" fill="#6b6b6b"/></svg>
<div class="abs" style="left:842px;top:955px;width:273px;height:25px;background:#fff;border:1px solid #777"></div>
<div class="abs" style="left:1279px;top:955px;width:25px;height:25px;background:#fff;border:1px solid #777"></div>
<svg style="left:1289px;top:962px" width="8" height="12"><polygon points="0.300,0 0.300,11 6.300,5.500" fill="#6b6b6b"/></svg>
<!-- status bar -->
<div class="abs" style="left:2px;top:985px;width:1331px;height:33px;background:#f3f2f1"></div>
<div class="abs" style="left:2px;top:985px;width:1331px;height:1px;background:#d4d2d0"></div>
<span class="t" style="left:12px;top:994px;font-size:16.300px;color:#444;transform:scaleX(.89)">Ready</span>
<svg style="left:83px;top:992px" width="23" height="20" viewBox="0 0 23 20"><g fill="none" stroke="#444" stroke-width="1.400"><path d="M7.200,18.300 H0.900 V1.100 H21 V7.200 M0.900,4.400 H21 M3.100,7.500 H7.500 M3.100,10.700 H6.900 M3.100,13.600 H6.600"/><circle cx="14.800" cy="13.600" r="5.900"/></g><circle cx="14.800" cy="13.600" r="2.700" fill="#444"/></svg>
<svg style="left:129px;top:991px" width="25" height="23" viewBox="0 0 25 23"><g fill="none" stroke="#444" stroke-width="1.400" stroke-linecap="round" stroke-linejoin="round"><circle cx="10.400" cy="3.800" r="2.700"/><path d="M7.600,6.600 C5,5.400 3.200,3.600 1.800,5 C0.800,6.400 3,7.600 6.400,8.400 C7.800,12 6.400,15 5.200,17.600 C4.400,19.600 6.400,20.800 7.800,19.400 M13.200,6.600 C15.800,5.400 17.600,3.600 19,5 C20,6.400 17.800,7.600 14.400,8.400 V12.600"/><path d="M11.200,16.400 L15.500,20.800 L23.400,13.200" stroke-width="1.500"/></g></svg>
<span class="t" style="left:156px;top:994px;font-size:16.300px;color:#444;transform:scaleX(.945)">Accessibility: Good to go</span>
<div class="abs" style="left:871px;top:986px;width:60px;height:32px;background:#d2d0ce"></div>
<svg style="left:890px;top:991px" width="21" height="21" viewBox="0 0 21 21"><rect x="1" y="1" width="19" height="19" fill="none" stroke="#444" stroke-width="1.6"/><path d="M7.3,1 V20 M13.7,1 V20 M1,7.3 H20 M1,13.7 H20" stroke="#444" stroke-width="1.6"/></svg>
<svg style="left:950px;top:991px" width="22" height="21" viewBox="0 0 22 21"><rect x="1" y="1" width="20" height="19" fill="none" stroke="#444" stroke-width="1.6"/><rect x="5" y="4.6" width="12" height="11.8" fill="none" stroke="#444" stroke-width="1.3"/><path d="M7.5,8 H14.5 M7.5,10.6 H14.5 M7.5,13.2 H14.5" stroke="#444" stroke-width="1.3"/></svg>
<svg style="left:1010px;top:991px" width="22" height="21" viewBox="0 0 22 21"><rect x="1" y="1" width="20" height="19" fill="none" stroke="#444" stroke-width="1.6"/><path d="M7.3,1 V10.5 M13.7,1 V10.5 H1" fill="none" stroke="#444" stroke-width="1.4"/></svg>
<div class="abs" style="left:1059px;top:1001px;width:12px;height:1px;background:#555"></div>
<div class="abs" style="left:1079px;top:1001px;width:148px;height:2px;background:#444"></div>
<div class="abs" style="left:1152px;top:997px;width:2px;height:9px;background:#444"></div>
<div class="abs" style="left:1192px;top:993px;width:8px;height:17px;background:#777"></div>
<div class="abs" style="left:1235px;top:1001px;width:12px;height:1px;background:#555"></div>
<div class="abs" style="left:1240px;top:996px;width:1px;height:12px;background:#555"></div>
<span class="t" style="left:1265px;top:993.500px;font-size:15.500px;color:#555;transform:scaleX(.99)">280%</span>
<!--BOTTOM-END-->
</body>
</html>
